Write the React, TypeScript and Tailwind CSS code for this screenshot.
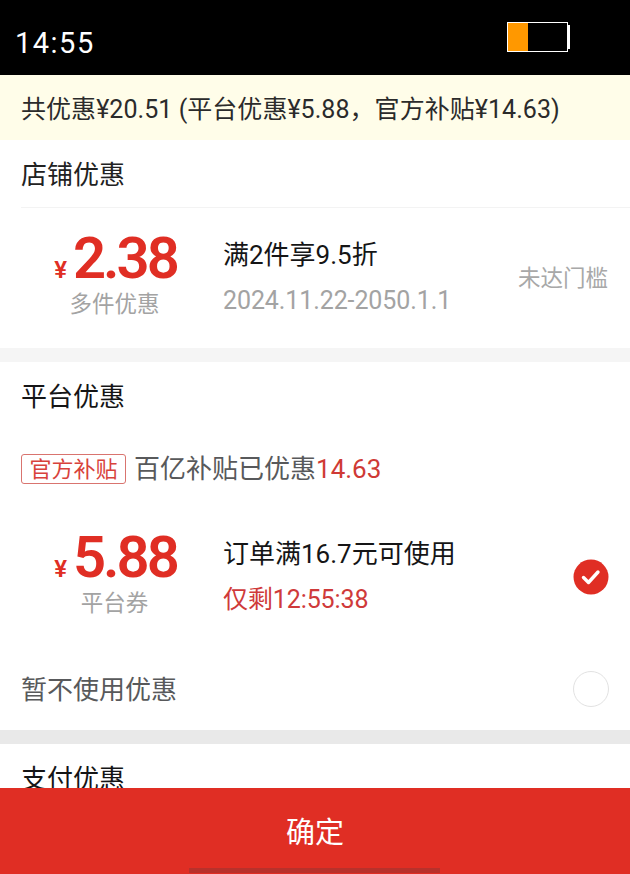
import React from "react";

const font = { fontFamily: 'Roboto, "Noto Sans CJK SC", sans-serif' };

function Coupon({ amount, label, title, sub, subCls, right }: { amount: string; label: string; title: string; sub: string; subCls: string; right: React.ReactNode }) {
  return (
    <div className="flex items-start">
      <div className="w-[223px] shrink-0 flex flex-col items-center pl-[6px]">
        <div className="flex items-baseline h-[56px] text-[#e02e24] font-semibold leading-[56px] pl-[2px]">
          <span className="text-[24px] mr-[6px]">¥</span>
          <span className="text-[58px] tracking-[-3px]">{amount}</span>
        </div>
        <div className="text-[22.5px] leading-[30px] text-[#a3a3a3] mt-[3px] whitespace-nowrap">{label}</div>
      </div>
      <div className="flex-1 flex flex-col pt-[7px]">
        <div className="text-[26px] leading-[36px] text-[#151516] whitespace-nowrap">{title}</div>
        <div className={`text-[25px] leading-[36px] mt-[10px] tracking-[-0.1px] whitespace-nowrap ${subCls}`}>{sub}</div>
      </div>
      {right}
    </div>
  );
}

export default function App() {
  return (
    <div style={font} className="relative w-[630px] h-[874px] overflow-hidden bg-white">
      <div className="h-[75px] bg-black flex items-start justify-between">
        <div className="text-white text-[29px] leading-[36px] tracking-[1.5px] pl-[15px] pt-[25px]">14:55</div>
        <div className="flex items-center mt-[22px] mr-[60px]">
          <div className="w-[61px] h-[30px] border border-white flex">
            <div className="w-[20px] bg-[#ff9800]" />
          </div>
          <div className="w-[2px] h-[24px] bg-white" />
        </div>
      </div>

      <div className="h-[65px] bg-[#fffde9] flex items-center pl-[21px] pt-[5px] text-[25px] tracking-[0.05px] text-[#2b2b2b] whitespace-nowrap">
        共优惠¥20.51 (平台优惠¥5.88，官方补贴¥14.63)
      </div>

      <section className="h-[208px]">
        <div className="ml-[21px] h-[68px] pt-[4px] border-b border-[#f3f3f3] flex items-center text-[26px] text-[#222222]">店铺优惠</div>
        <div className="pt-[22px]">
          <Coupon
            amount="2.38"
            label="多件优惠"
            title="满2件享9.5折"
            sub="2024.11.22-2050.1.1"
            subCls="text-[#a3a3a3]"
            right={<div className="w-[133px] text-[22.5px] leading-[30px] text-[#a8a8a8] mt-[33px] pl-[21px] whitespace-nowrap">未达门槛</div>}
          />
        </div>
      </section>

      <div className="h-[14px] bg-[#f5f5f5]" />

      <section className="h-[368px]">
        <div className="px-[21px] h-[69px] pt-[2px] flex items-center text-[26px] text-[#151516]">平台优惠</div>
        <div className="px-[21px] mt-[23px] flex items-center h-[30px]">
          <span className="h-[30px] w-[105px] border border-[#d9746f] rounded-[3px] text-[#d8423b] text-[22px] leading-[29px] text-center">官方补贴</span>
          <span className="ml-[8px] text-[26px] text-[#58595b]">百亿补贴已优惠</span>
          <span className="text-[26px] text-[#cf3a35]">14.63</span>
        </div>
        <div className="mt-[45px]">
          <Coupon
            amount="5.88"
            label="平台券"
            title="订单满16.7元可使用"
            sub="仅剩12:55:38"
            subCls="text-[#cf3a3a]"
            right={
              <svg width="36" height="36" viewBox="0 0 36 36" className="mt-[30px] mr-[21px]">
                <circle cx="18" cy="18" r="17.5" fill="#e02e24" />
                <path d="M10.5 18.5 L15.5 23.5 L25 13" fill="none" stroke="#fff" strokeWidth="3.4" strokeLinecap="round" strokeLinejoin="round" />
              </svg>
            }
          />
        </div>
        <div className="mt-[50px] pl-[21px] pr-[21px] flex items-center justify-between">
          <span className="text-[26px] text-[#58595b] pt-[3px]">暂不使用优惠</span>
          <span className="w-[36px] h-[36px] rounded-full border border-[#e2e2e2]" />
        </div>
      </section>

      <div className="h-[14px] bg-[#e9e9e9]" />

      <section className="px-[21px] pt-[16px] text-[26px] text-[#151516]">支付优惠</section>

      <div className="absolute left-0 right-0 bottom-0 h-[86px] bg-[#e02e24] flex items-center justify-center text-white text-[29px]">
        <span className="pt-[5px]">确定</span>
        <div className="absolute bottom-[1px] left-[189px] w-[251px] h-[5px] bg-[#b8312b]" />
      </div>
    </div>
  );
}
